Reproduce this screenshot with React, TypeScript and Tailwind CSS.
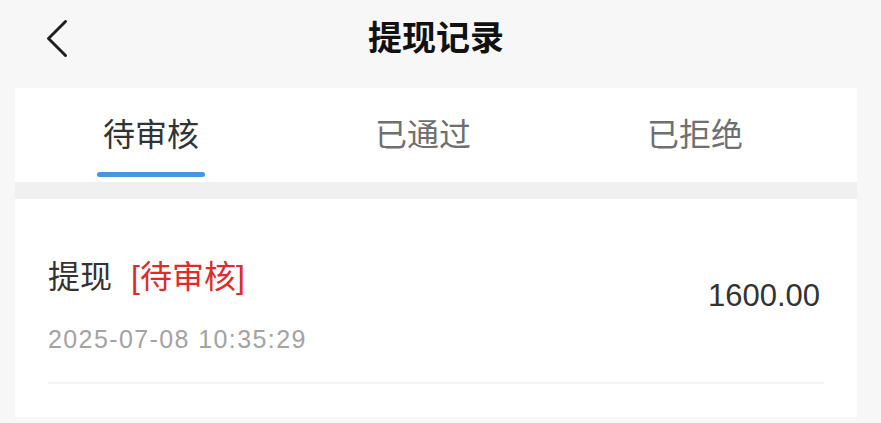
const FONT = "font-['Liberation_Sans','Noto_Sans_CJK_SC',sans-serif]";

const tabs = ["待审核", "已通过", "已拒绝"];

const App = () => {
  return (
    <div className={`w-[881px] h-[423px] bg-[#f7f7f7] overflow-hidden ${FONT}`}>
      {/* Header */}
      <div className="ml-[15px] w-[842px] h-[88px] grid grid-cols-[1fr_auto_1fr] items-center">
        <div className="pl-[30px] pb-[10px]">
          <svg width="24" height="40" viewBox="0 0 24 40" fill="none">
            <path d="M20.5 2.5 L3.5 19.5 L20.5 36.5" stroke="#1f1f1f" strokeWidth="3" strokeLinecap="round" strokeLinejoin="round" />
          </svg>
        </div>
        <h1 className="text-[34px] leading-none font-bold text-[#111] pb-[12px]">提现记录</h1>
        <div />
      </div>

      <div className="ml-[15px] w-[842px] flex flex-col gap-[17px] bg-[#f0f0f0]">
        {/* Tabs */}
        <div className="h-[94px] bg-white flex">
          {tabs.map((t, i) => (
            <div key={t} className="w-[272px] flex flex-col items-center pt-[31px]">
              <span className={`text-[32px] leading-none ${i === 0 ? "text-[#333]" : "text-[#6f6f6f]"}`}>{t}</span>
              {i === 0 && <div className="mt-[21px] w-[108px] h-[5px] rounded-full bg-[#4795e3]" />}
            </div>
          ))}
        </div>

        {/* Record list */}
        <div className="h-[218px] bg-white px-[33px] pt-[62px]">
          <div className="flex items-start justify-between">
            <div className="flex flex-col">
              <div className="text-[32px] leading-none flex">
                <span className="text-[#333]">提现</span>
                <span className="ml-[19px] text-[#e02b2b]">[待审核]</span>
              </div>
              <div className="mt-[34px] text-[25px] leading-none tracking-[1.4px] text-[#a3a3a3]">2025-07-08 10:35:29</div>
            </div>
            <div className="mt-[19px] mr-[4px] text-[31px] leading-none text-[#333]">1600.00</div>
          </div>
          <div className="mt-[30px] h-[2px] bg-[#f3f3f3]" />
        </div>
      </div>
    </div>
  );
};

export default App;
